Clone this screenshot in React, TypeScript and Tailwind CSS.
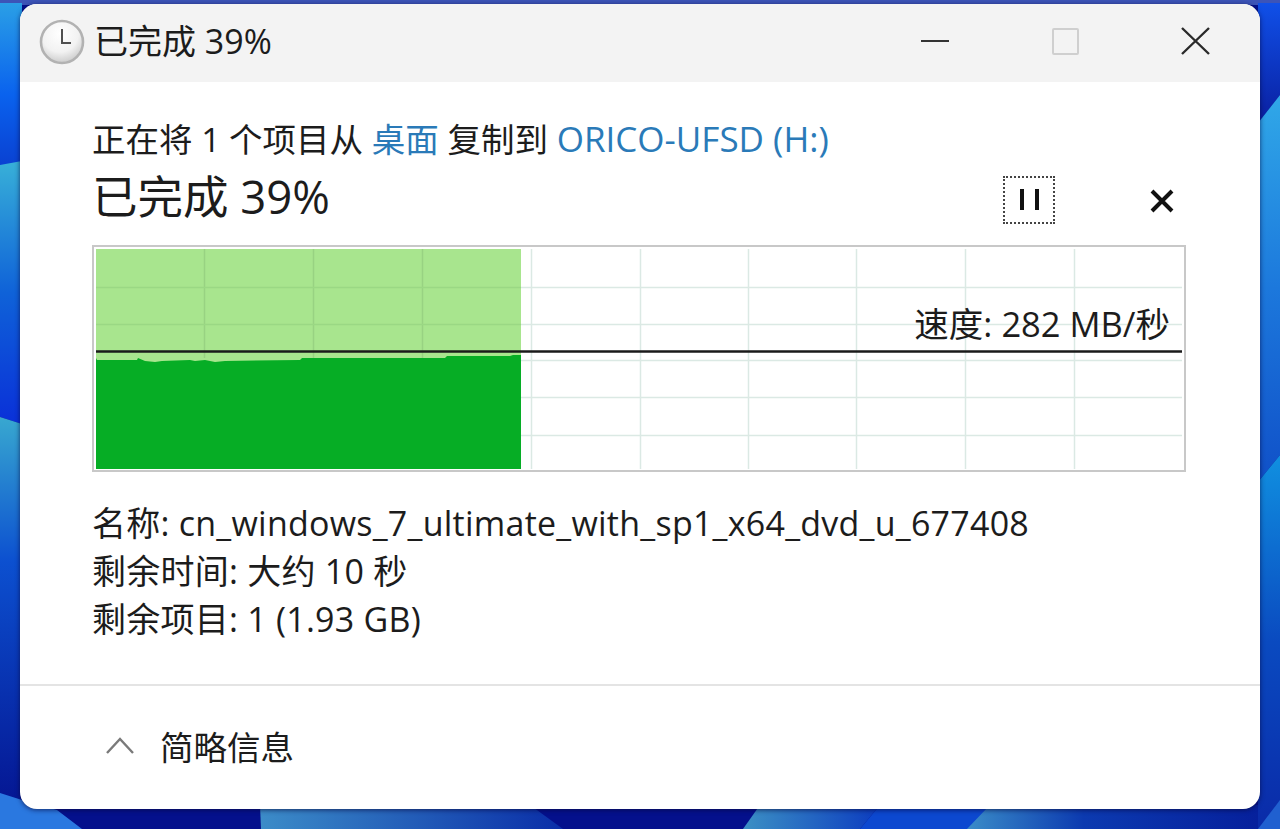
import React from 'react';

const FONT = '"Open Sans", "Noto Sans CJK SC", sans-serif';

const wave =
  '96,358 97,360 137,360 138,358 145,361 155,362 162,361 190,360 195,361 205,360 215,362 225,361 300,360 302,358 445,358 447,356 510,356 513,355 521,355 521,469 96,469';

// desktop wallpaper, only the edges of it show round the window
const Wallpaper = () => (
  <svg className="absolute inset-0" width="1280" height="829" viewBox="0 0 1280 829">
    <defs>
      <linearGradient id="left1" x1="0" y1="0" x2="0" y2="1">
        <stop offset="0" stopColor="#2a9fe6" />
        <stop offset="0.55" stopColor="#0a62ee" />
        <stop offset="1" stopColor="#0a3fd0" />
      </linearGradient>
      <linearGradient id="left2" x1="0" y1="0" x2="0" y2="1">
        <stop offset="0" stopColor="#38b0d8" />
        <stop offset="0.5" stopColor="#0f62d8" />
        <stop offset="1" stopColor="#0a30d8" />
      </linearGradient>
      <linearGradient id="left3" x1="0" y1="0" x2="0" y2="1">
        <stop offset="0" stopColor="#38a8d0" />
        <stop offset="0.35" stopColor="#0c50d0" />
        <stop offset="1" stopColor="#04108c" />
      </linearGradient>
      <linearGradient id="right1" x1="0" y1="0" x2="0" y2="1">
        <stop offset="0" stopColor="#1050e8" />
        <stop offset="1" stopColor="#0a1fa0" />
      </linearGradient>
      <linearGradient id="right2" x1="0" y1="0" x2="0" y2="1">
        <stop offset="0" stopColor="#30a8e8" />
        <stop offset="0.5" stopColor="#1c78dc" />
        <stop offset="1" stopColor="#1050c8" />
      </linearGradient>
      <linearGradient id="right3" x1="0" y1="0" x2="0" y2="1">
        <stop offset="0" stopColor="#1090e0" />
        <stop offset="0.5" stopColor="#0a4ac0" />
        <stop offset="1" stopColor="#0a2aa8" />
      </linearGradient>
      <linearGradient id="band1" x1="0" y1="0" x2="1" y2="0">
        <stop offset="0" stopColor="#3c8cc8" />
        <stop offset="1" stopColor="#0a2ea8" />
      </linearGradient>
      <linearGradient id="band2" x1="0" y1="0" x2="1" y2="0">
        <stop offset="0" stopColor="#3c90c4" />
        <stop offset="1" stopColor="#0c3cc0" />
      </linearGradient>
      <linearGradient id="band3" x1="0" y1="0" x2="1" y2="0">
        <stop offset="0" stopColor="#3a8cc8" />
        <stop offset="0.4" stopColor="#0c3ab0" />
        <stop offset="1" stopColor="#06209c" />
      </linearGradient>
    </defs>
    <rect width="1280" height="829" fill="#04108c" />
    <rect width="1280" height="5" fill="#3c54b8" />
    <polygon points="0,3 22,3 22,170 0,165" fill="url(#left1)" />
    <polygon points="0,165 22,161 22,424 0,417" fill="url(#left2)" />
    <polygon points="0,417 22,424 22,829 0,829" fill="url(#left3)" />
    <polygon points="0,793 22,800 57,810 82,829 0,829" fill="#2a78e0" />
    <polygon points="1258,3 1280,3 1280,95 1258,123" fill="url(#right1)" />
    <polygon points="1258,123 1280,95 1280,455 1258,482" fill="url(#right2)" />
    <polygon points="1258,482 1280,455 1280,829 1258,829" fill="url(#right3)" />
    <polygon points="260,805 530,805 563,829 261,829" fill="url(#band1)" />
    <polygon points="760,805 880,805 860,829 743,829" fill="url(#band2)" />
    <polygon points="880,805 990,805 970,829 860,829" fill="#0c48d0" />
    <polygon points="990,805 1258,805 1258,829 967,829" fill="url(#band3)" />
    <polygon points="1280,800 1280,829 1258,829" fill="#2060d0" />
  </svg>
);

const ClockIcon = () => (
  <svg width="46" height="46" viewBox="0 0 46 46">
    <defs>
      <radialGradient id="clockFace" cx="0.45" cy="0.3" r="0.8">
        <stop offset="0" stopColor="#ffffff" />
        <stop offset="0.55" stopColor="#f2f2f2" />
        <stop offset="1" stopColor="#bdbdbd" />
      </radialGradient>
    </defs>
    <circle cx="23" cy="23" r="21" fill="url(#clockFace)" stroke="#b2b2b2" strokeWidth="2.6" />
    <path d="M23 10V24H32" fill="none" stroke="#505050" strokeWidth="2" />
  </svg>
);

const SpeedChart = () => {
  const vLines = [204.5, 313.5, 422.5, 531.5, 640.5, 748.5, 856.5, 965.5, 1074.5];
  const hLines = [287.5, 324.5, 360.5, 397.5, 435.5];
  return (
    <svg className="block" width="1094" height="227" viewBox="92 245 1094 227">
      <rect x="93" y="246" width="1092" height="225" fill="#ffffff" stroke="#c8c8c8" strokeWidth="2" />
      {vLines.map((x) => (
        <line key={x} x1={x} y1="249" x2={x} y2="469" stroke="#dbe9e4" strokeWidth="1.5" />
      ))}
      {hLines.map((y) => (
        <line key={y} x1="96" y1={y} x2="1182" y2={y} stroke="#dbe9e4" strokeWidth="1.5" />
      ))}
      <rect x="96" y="249" width="425" height="220" fill="#a8e58e" />
      {[204.5, 313.5, 422.5].map((x) => (
        <line key={x} x1={x} y1="249" x2={x} y2="358" stroke="#98d282" strokeWidth="1.5" />
      ))}
      {[287.5, 324.5].map((y) => (
        <line key={y} x1="96" y1={y} x2="521" y2={y} stroke="#9ad884" strokeWidth="1.5" />
      ))}
      <polygon points={wave} fill="#06ad25" />
      <line x1="96" y1="351.5" x2="1182" y2="351.5" stroke="#1a1a1a" strokeWidth="2.4" />
    </svg>
  );
};

export default function App() {
  return (
    <div
      className="relative w-[1280px] h-[829px] overflow-hidden pl-[20px] pt-[4px] text-[#1c1c1c]"
      style={{ fontFamily: FONT }}
    >
      <Wallpaper />
      <div className="relative flex flex-col w-[1240px] h-[805px] rounded-[17px] overflow-hidden bg-white shadow-[0_1px_5px_rgba(10,10,60,0.7)]">
        <div className="flex items-center h-[78px] bg-[#f3f3f3] shrink-0">
          <div className="ml-[19px] mt-[-3px] flex">
            <ClockIcon />
          </div>
          <span className="ml-[9px] mt-[-4px] text-[34px] leading-[44px]">已完成 39%</span>
          <div className="ml-auto flex mt-[-4px]">
            <button className="w-[130px] h-[44px] flex items-center justify-center">
              <svg width="28" height="4" viewBox="0 0 28 4">
                <path d="M0 2H28" stroke="#333333" strokeWidth="2.2" />
              </svg>
            </button>
            <button className="w-[130px] h-[44px] flex items-center justify-center">
              <div className="w-[27px] h-[27px] border-2 border-[#cfcfcf] rounded-[2px]" />
            </button>
            <button className="w-[130px] h-[44px] flex items-center justify-center">
              <svg width="30" height="30" viewBox="0 0 30 30">
                <path d="M2 2L29 28M29 2L2 28" stroke="#2a2a2a" strokeWidth="2.4" />
              </svg>
            </button>
          </div>
        </div>

        <div className="pl-[72px] pr-[74px] pt-[33px] flex-1">
          <div className="text-[33.5px] leading-[48px] whitespace-nowrap">
            正在将 1 个项目从 <span className="text-[#2a7ab8]">桌面</span> 复制到{' '}
            <span className="text-[#2a7ab8] text-[35px]">ORICO-UFSD (H:)</span>
          </div>
          <div className="flex items-center h-[66px] mb-[16px]">
            <span className="text-[45.5px] leading-[66px]">已完成 39%</span>
            <button className="ml-auto w-[52px] h-[48px] mr-[131px] mt-[7px] flex items-center justify-center gap-[11px] border-2 border-dotted border-[#444444]">
              <span className="w-[4px] h-[21px] bg-[#111111]" />
              <span className="w-[4px] h-[21px] bg-[#111111]" />
            </button>
            <svg className="absolute left-[1130px] top-[185px]" width="24" height="24" viewBox="0 0 24 24">
              <path d="M2 2L22 22M22 2L2 22" stroke="#111111" strokeWidth="4" />
            </svg>
          </div>

          <div className="relative w-[1094px] h-[227px]">
            <SpeedChart />
            <span className="absolute right-[16px] top-[55px] text-[34.5px] leading-[48px] whitespace-nowrap">
              速度: 282 MB/秒
            </span>
          </div>

          <div className="mt-[27px] text-[34px] leading-[48px] tracking-[0.24px] whitespace-nowrap">
            <div>名称: cn_windows_7_ultimate_with_sp1_x64_dvd_u_677408</div>
            <div>剩余时间: 大约 10 秒</div>
            <div>剩余项目: 1 (1.93 GB)</div>
          </div>
        </div>

        <div className="flex items-center h-[125px] shrink-0 border-t-2 border-[#e4e4e4] pl-[85px]">
          <svg className="mb-[4px]" width="30" height="17" viewBox="0 0 30 17">
            <path d="M2 16L15 2L28 16" fill="none" stroke="#7a7a7a" strokeWidth="2.4" />
          </svg>
          <span className="ml-[25px] mb-[2px] text-[33.5px] leading-[48px]">简略信息</span>
        </div>
      </div>
    </div>
  );
}
